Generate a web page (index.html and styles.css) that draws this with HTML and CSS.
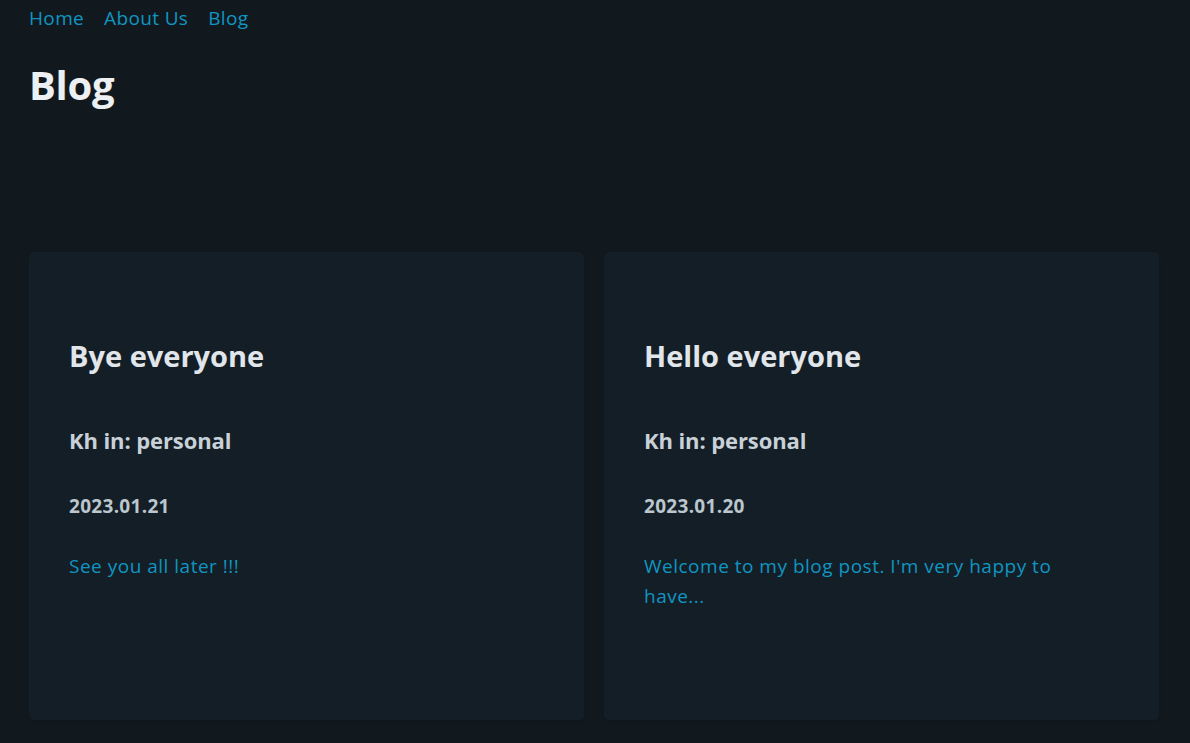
FILE: index.html
```html
<!DOCTYPE html>
<html lang="en">
<head>
<meta charset="utf-8">
<title>Blog</title>
<link rel="stylesheet" href="styles.css">
</head>
<body>
<div class="page">
  <nav class="nav">
    <a href="#">Home</a>
    <a href="#">About Us</a>
    <a href="#">Blog</a>
  </nav>
  <h1 class="title">Blog</h1>
  <div class="grid">
    <article class="card">
      <h2>Bye everyone</h2>
      <h3>Kh in: personal</h3>
      <h5>2023.01.21</h5>
      <a class="excerpt" href="#">See you all later !!!</a>
    </article>
    <article class="card">
      <h2>Hello everyone</h2>
      <h3>Kh in: personal</h3>
      <h5>2023.01.20</h5>
      <a class="excerpt" href="#">Welcome to my blog post. I'm very happy to have...</a>
    </article>
  </div>
</div>
</body>
</html>
```
FILE: styles.css
```css
html, body {
  margin: 0;
  padding: 0;
  background: #11191f;
  height: 100%;
}
body {
  font-family: "Open Sans", "Noto Sans CJK KR", sans-serif;
  color: #bbc6ce;
  font-size: 19px;
}
.page {
  padding: 0 31px 0 29px;
}
.nav {
  display: flex;
  gap: 20px;
  padding-top: 4px;
  line-height: 28px;
  letter-spacing: 0.35px;
}
.nav a {
  color: #1095c1;
  text-decoration: none;
}
.title {
  margin: 0;
  margin-top: 29px;
  font-size: 40px;
  line-height: 48px;
  color: #edf0f3;
  font-weight: 700;
  letter-spacing: -0.3px;
}
.grid {
  display: grid;
  grid-template-columns: 1fr 1fr;
  gap: 20px;
  margin-top: 143px;
}
.card {
  background: #141e26;
  border-radius: 5px;
  padding: 84px 62px 109px 40px;
  box-shadow: 0 1px 3px rgba(0,0,0,0.15);
}
.card h2 {
  margin: 0;
  font-size: 29px;
  line-height: 40px;
  color: #e1e6eb;
}
.card h3 {
  margin: 49px 0 0;
  font-size: 22px;
  line-height: 30px;
  color: #c8d1d8;
  letter-spacing: -0.1px;
}
.card h5 {
  margin: 38px 0 0;
  font-size: 19px;
  line-height: 26px;
  color: #bbc6ce;
  letter-spacing: 0.3px;
}
.excerpt {
  display: block;
  margin-top: 32px;
  line-height: 30px;
  color: #1095c1;
  text-decoration: none;
  letter-spacing: 0.5px;
}
```
